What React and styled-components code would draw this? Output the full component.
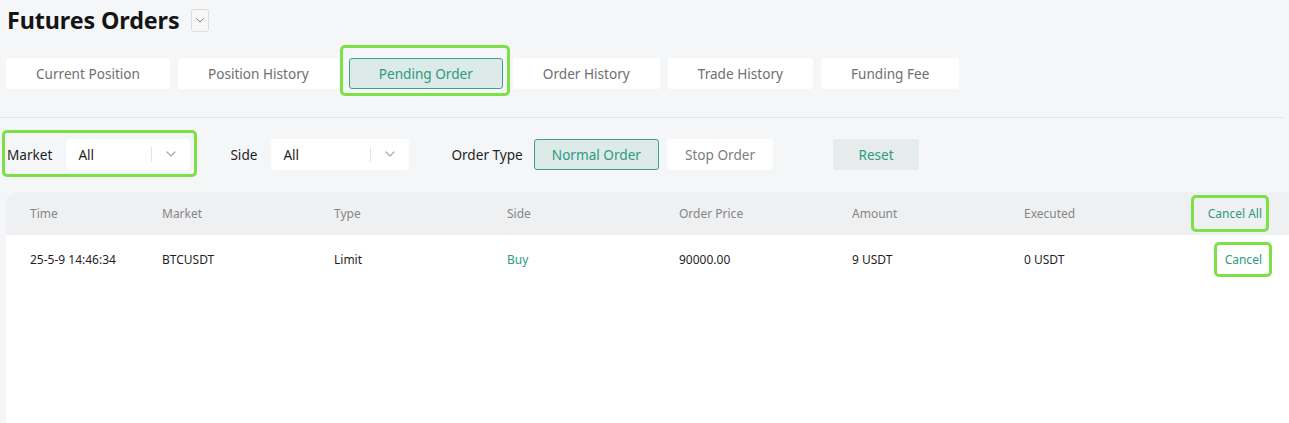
import styled, { createGlobalStyle, css } from 'styled-components';

const GlobalStyle = createGlobalStyle`
  html, body {
    margin: 0;
    padding: 0;
    background: #f5f6f8;
    font-family: 'Noto Sans', 'Open Sans', sans-serif;
    color: #1d1d1f;
  }
  * { box-sizing: border-box; }
`;

const green = '#2f9a80';

// lime annotation frame drawn over a part (insets: top right bottom left)
const marked = css`
  position: relative;
  ${(p) =>
    p.$mark &&
    css`
      &::after {
        content: '';
        position: absolute;
        top: -${p.$mark[0]}px;
        right: -${p.$mark[1]}px;
        bottom: -${p.$mark[2]}px;
        left: -${p.$mark[3]}px;
        border: 3px solid #7ce046;
        border-radius: 5px;
        pointer-events: none;
      }
    `}
`;

const Page = styled.div`
  height: 423px;
  overflow: hidden;
  padding: 5px 0 0 0;
  display: flex;
  flex-direction: column;
`;

const TitleRow = styled.div`
  display: flex;
  align-items: center;
  gap: 11px;
  padding-left: 7px;
  height: 30px;
`;

const Title = styled.h1`
  margin: 0;
  font-size: 23.3px;
  font-weight: 700;
  letter-spacing: -0.1px;
  color: #141414;
`;

const SmallDrop = styled.span`
  width: 18px;
  height: 23px;
  border: 1px solid #dcdde0;
  border-radius: 3px;
  display: flex;
  align-items: center;
  justify-content: center;
  color: #777;
  background: #f7f7f8;
`;

const Tabs = styled.div`
  display: flex;
  gap: 8px;
  padding: 23px 0 0 6px;
`;

const Tab = styled.div`
  height: 31px;
  padding: 0 29px;
  display: flex;
  align-items: center;
  background: #fff;
  border-radius: 3px;
  font-size: 13.6px;
  color: #6f6f6f;
  border: 1px solid transparent;
  ${(p) =>
    p.$active &&
    css`
      background: #dcebe8;
      border-color: #3f9f88;
      color: ${green};
      margin: 0 2px;
    `}
  ${marked}
`;

const Divider = styled.div`
  height: 1px;
  background: #e6e7ea;
  margin: 28px 4px 0 0;
`;

const Filters = styled.div`
  display: flex;
  align-items: center;
  padding: 20px 0 0 7px;
  height: 52px;
`;

const FilterGroup = styled.div`
  display: flex;
  align-items: center;
  gap: 14px;
  margin-right: ${(p) => p.$gap ?? 40}px;
  ${marked}
`;

const Label = styled.span`
  font-size: 13.6px;
  color: #1f1f1f;
`;

const Select = styled.div`
  width: ${(p) => p.$w}px;
  height: 31px;
  background: #fff;
  border-radius: 3px;
  display: flex;
  align-items: center;
  padding: 0 0 0 12px;
  font-size: 13.6px;
  color: #1f1f1f;
`;

const SelectValue = styled.span`
  flex: 1;
`;

const SelectSep = styled.span`
  width: 1px;
  height: 15px;
  background: #e3e3e3;
`;

const SelectArrow = styled.span`
  width: 38px;
  display: flex;
  justify-content: center;
  color: #aaa;
`;

const TypeButtons = styled.div`
  display: flex;
  gap: 8px;
  margin-right: 60px;
  margin-left: -3px;
`;

const ToggleButton = styled.div`
  height: 31px;
  padding: 0 17px;
  display: flex;
  align-items: center;
  font-size: 13.6px;
  border-radius: 3px;
  background: #fff;
  color: #7d7d7d;
  border: 1px solid transparent;
  ${(p) =>
    p.$active &&
    css`
      background: #dcebe8;
      border-color: #3f9f88;
      color: ${green};
    `}
`;

const ResetButton = styled.div`
  width: 86px;
  height: 31px;
  border-radius: 3px;
  background: #e6ecec;
  color: ${green};
  font-size: 13.6px;
  display: flex;
  align-items: center;
  justify-content: center;
`;

const Table = styled.div`
  flex: 1;
  margin: 22px 0 0 6px;
  background: #fff;
  border-top-left-radius: 12px;
`;

const Grid = styled.div`
  display: grid;
  grid-template-columns: 132px 172px 173px 172px 173px 172px 1fr auto;
  align-items: center;
  padding: 0 27px 0 24px;
  height: ${(p) => (p.$head ? 43 : 48)}px;
  background: ${(p) => (p.$head ? '#eff0f2' : '#fff')};
  border-top-left-radius: ${(p) => (p.$head ? 12 : 0)}px;
  font-size: 12px;
  color: ${(p) => (p.$head ? '#868686' : '#1f1f1f')};
`;

const Cell = styled.span`
  color: ${(p) => (p.$green ? green : 'inherit')};
`;

const ActionCell = styled.span`
  justify-self: end;
  color: ${green};
  ${marked}
`;

const Chevron = ({ size = 10 }) => (
  <svg width={size} height={size * 0.6} viewBox="0 0 10 6" fill="none">
    <path d="M1 1l4 4 4-4" stroke="currentColor" strokeWidth="1.2" strokeLinecap="round" strokeLinejoin="round" />
  </svg>
);

const tabs = ['Current Position', 'Position History', 'Pending Order', 'Order History', 'Trade History', 'Funding Fee'];
const columns = ['Time', 'Market', 'Type', 'Side', 'Order Price', 'Amount', 'Executed'];

const orders = [
  { time: '25-5-9 14:46:34', market: 'BTCUSDT', type: 'Limit', side: 'Buy', price: '90000.00', amount: '9 USDT', executed: '0 USDT' },
];

export default function App() {
  return (
    <Page>
      <GlobalStyle />
      <TitleRow>
        <Title>Futures Orders</Title>
        <SmallDrop>
          <Chevron size={8} />
        </SmallDrop>
      </TitleRow>

      <Tabs>
        {tabs.map((t) => (
          <Tab key={t} $active={t === 'Pending Order'} $mark={t === 'Pending Order' ? [14, 8, 8, 10] : null}>
            {t}
          </Tab>
        ))}
      </Tabs>

      <Divider />

      <Filters>
        <FilterGroup $mark={[9, 7, 7, 5]}>
          <Label>Market</Label>
          <Select $w={124}>
            <SelectValue>All</SelectValue>
            <SelectSep />
            <SelectArrow>
              <Chevron />
            </SelectArrow>
          </Select>
        </FilterGroup>
        <FilterGroup $gap={42}>
          <Label>Side</Label>
          <Select $w={138}>
            <SelectValue>All</SelectValue>
            <SelectSep />
            <SelectArrow>
              <Chevron />
            </SelectArrow>
          </Select>
        </FilterGroup>
        <FilterGroup $gap={0}>
          <Label>Order Type</Label>
          <TypeButtons>
            <ToggleButton $active>Normal Order</ToggleButton>
            <ToggleButton>Stop Order</ToggleButton>
          </TypeButtons>
        </FilterGroup>
        <ResetButton>Reset</ResetButton>
      </Filters>

      <Table>
        <Grid $head>
          {columns.map((c) => (
            <Cell key={c}>{c}</Cell>
          ))}
          <ActionCell $mark={[10, 7, 10, 17]}>Cancel All</ActionCell>
        </Grid>
        {orders.map((o) => (
          <Grid key={o.time}>
            <Cell>{o.time}</Cell>
            <Cell>{o.market}</Cell>
            <Cell>{o.type}</Cell>
            <Cell $green>{o.side}</Cell>
            <Cell>{o.price}</Cell>
            <Cell>{o.amount}</Cell>
            <Cell>{o.executed}</Cell>
            <ActionCell $mark={[9, 10, 9, 11]}>Cancel</ActionCell>
          </Grid>
        ))}
      </Table>
    </Page>
  );
}
